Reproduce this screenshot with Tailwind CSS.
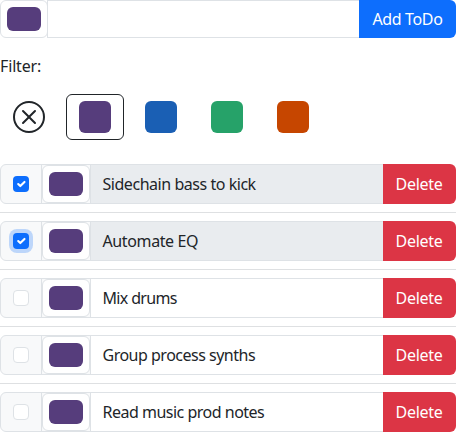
<!DOCTYPE html>
<html lang="en">
<head>
<meta charset="utf-8">
<title>ToDo</title>
<script src="https://cdn.jsdelivr.net/npm/@tailwindcss/browser@4"></script>
</head>
<body class="bg-white text-[#212529] text-base font-['Noto_Sans',sans-serif] overflow-hidden">
<form class="flex h-[38px]">
  <div class="w-12 shrink-0 rounded-md border border-[#dee2e6] px-1.5 py-1.5"><div class="h-6 rounded-md bg-[#563d7c]"></div></div>
  <div class="-ml-px grow border border-[#dee2e6]"></div>
  <button type="button" class="-ml-px w-[97px] shrink-0 rounded-r-md bg-[#0d6efd] text-white whitespace-nowrap tracking-[-0.35px]">Add ToDo</button>
</form>
<p class="mt-4 h-6 leading-6 tracking-[-0.15px]">Filter:</p>
<div class="mt-4 flex h-[46px] gap-2">
  <div class="flex w-[58px] items-center justify-center">
    <svg class="size-8" viewBox="0 0 16 16" fill="#212529"><path d="M8 15A7 7 0 1 1 8 1a7 7 0 0 1 0 14m0 1A8 8 0 1 0 8 0a8 8 0 0 0 0 16"/><path d="M4.646 4.646a.5.5 0 0 1 .708 0L8 7.293l2.646-2.647a.5.5 0 0 1 .708.708L8.707 8l2.647 2.646a.5.5 0 0 1-.708.708L8 8.707l-2.646 2.647a.5.5 0 0 1-.708-.708L7.293 8 4.646 5.354a.5.5 0 0 1 0-.708"/></svg>
  </div>
  <div class="flex w-[58px] items-center justify-center rounded-md border border-[#212529]"><div class="size-8 rounded-md bg-[#563d7c]"></div></div>
  <div class="flex w-[58px] items-center justify-center"><div class="size-8 rounded-md bg-[#1a5fb4]"></div></div>
  <div class="flex w-[58px] items-center justify-center"><div class="size-8 rounded-md bg-[#26a269]"></div></div>
  <div class="flex w-[58px] items-center justify-center"><div class="size-8 rounded-md bg-[#c64600]"></div></div>
</div>
<ul class="mt-6">
  <li class="flex h-10">
    <div class="flex w-[42px] shrink-0 items-center justify-center rounded-l-md border border-[#dee2e6] bg-[#f8f9fa]"><span class="size-4 rounded bg-[#0d6efd] p-px"><svg class="size-3.5" viewBox="0 0 20 20" fill="none" stroke="#fff" stroke-width="3" stroke-linecap="round" stroke-linejoin="round"><path d="m6 10 3 3 6-6"/></svg></span></div>
    <div class="-ml-px w-[50px] shrink-0 border border-[#dee2e6] bg-[#f8f9fa]"><div class="h-[38px] rounded-md border border-[#dee2e6] bg-white p-1.5"><div class="h-6 rounded-md bg-[#563d7c]"></div></div></div>
    <div class="-ml-px flex grow items-center border border-[#dee2e6] bg-[#e9ecef] pl-[11.5px] tracking-[-0.46px]">Sidechain bass to kick</div>
    <button type="button" class="-ml-px w-[73px] shrink-0 rounded-r-md bg-[#dc3545] pr-px text-white tracking-[-0.3px]">Delete</button>
  </li>
  <li class="my-2 h-px bg-[#dee0e2]"></li>
  <li class="flex h-10">
    <div class="flex w-[42px] shrink-0 items-center justify-center rounded-l-md border border-[#dee2e6] bg-[#f8f9fa]"><span class="size-4 rounded bg-[#0d6efd] p-px ring-4 ring-[#0d6efd]/25"><svg class="size-3.5" viewBox="0 0 20 20" fill="none" stroke="#fff" stroke-width="3" stroke-linecap="round" stroke-linejoin="round"><path d="m6 10 3 3 6-6"/></svg></span></div>
    <div class="-ml-px w-[50px] shrink-0 border border-[#dee2e6] bg-[#f8f9fa]"><div class="h-[38px] rounded-md border border-[#dee2e6] bg-white p-1.5"><div class="h-6 rounded-md bg-[#563d7c]"></div></div></div>
    <div class="-ml-px flex grow items-center border border-[#dee2e6] bg-[#e9ecef] pl-[11.5px] tracking-[-0.38px]">Automate EQ</div>
    <button type="button" class="-ml-px w-[73px] shrink-0 rounded-r-md bg-[#dc3545] pr-px text-white tracking-[-0.3px]">Delete</button>
  </li>
  <li class="my-2 h-px bg-[#dee0e2]"></li>
  <li class="flex h-10">
    <div class="flex w-[42px] shrink-0 items-center justify-center rounded-l-md border border-[#dee2e6] bg-[#f8f9fa]"><span class="size-4 rounded border border-[#dee2e6] bg-white"></span></div>
    <div class="-ml-px w-[50px] shrink-0 border border-[#dee2e6] bg-[#f8f9fa]"><div class="h-[38px] rounded-md border border-[#dee2e6] bg-white p-1.5"><div class="h-6 rounded-md bg-[#563d7c]"></div></div></div>
    <div class="-ml-px flex grow items-center border border-[#dee2e6] bg-white pl-[11.5px] tracking-[-0.65px]">Mix drums</div>
    <button type="button" class="-ml-px w-[73px] shrink-0 rounded-r-md bg-[#dc3545] pr-px text-white tracking-[-0.3px]">Delete</button>
  </li>
  <li class="my-2 h-px bg-[#dee0e2]"></li>
  <li class="flex h-10">
    <div class="flex w-[42px] shrink-0 items-center justify-center rounded-l-md border border-[#dee2e6] bg-[#f8f9fa]"><span class="size-4 rounded border border-[#dee2e6] bg-white"></span></div>
    <div class="-ml-px w-[50px] shrink-0 border border-[#dee2e6] bg-[#f8f9fa]"><div class="h-[38px] rounded-md border border-[#dee2e6] bg-white p-1.5"><div class="h-6 rounded-md bg-[#563d7c]"></div></div></div>
    <div class="-ml-px flex grow items-center border border-[#dee2e6] bg-white pl-[11.5px] tracking-[-0.5px]">Group process synths</div>
    <button type="button" class="-ml-px w-[73px] shrink-0 rounded-r-md bg-[#dc3545] pr-px text-white tracking-[-0.3px]">Delete</button>
  </li>
  <li class="my-2 h-px bg-[#dee0e2]"></li>
  <li class="flex h-10">
    <div class="flex w-[42px] shrink-0 items-center justify-center rounded-l-md border border-[#dee2e6] bg-[#f8f9fa]"><span class="size-4 rounded border border-[#dee2e6] bg-white"></span></div>
    <div class="-ml-px w-[50px] shrink-0 border border-[#dee2e6] bg-[#f8f9fa]"><div class="h-[38px] rounded-md border border-[#dee2e6] bg-white p-1.5"><div class="h-6 rounded-md bg-[#563d7c]"></div></div></div>
    <div class="-ml-px flex grow items-center border border-[#dee2e6] bg-white pl-[11.5px] tracking-[-0.5px]">Read music prod notes</div>
    <button type="button" class="-ml-px w-[73px] shrink-0 rounded-r-md bg-[#dc3545] pr-px text-white tracking-[-0.3px]">Delete</button>
  </li>
</ul>
</body>
</html>
